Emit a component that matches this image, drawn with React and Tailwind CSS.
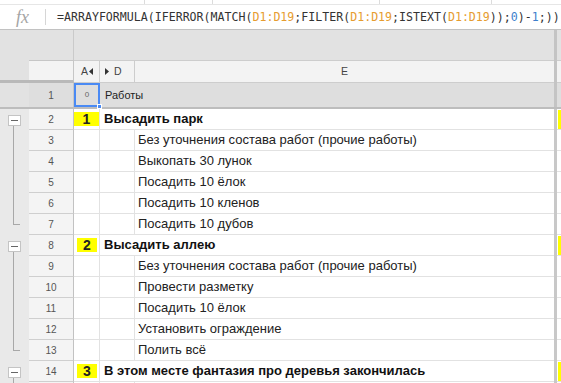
import React from 'react';

const rows = [
  { n: 2, group: '1', text: 'Высадить парк', line: 'group' },
  { n: 3, text: 'Без уточнения состава работ (прочие работы)', line: 'mid' },
  { n: 4, text: 'Выкопать 30 лунок', line: 'mid' },
  { n: 5, text: 'Посадить 10 ёлок', line: 'mid' },
  { n: 6, text: 'Посадить 10 кленов', line: 'mid' },
  { n: 7, text: 'Посадить 10 дубов', line: 'last' },
  { n: 8, group: '2', text: 'Высадить аллею', line: 'group', inset: true },
  { n: 9, text: 'Без уточнения состава работ (прочие работы)', line: 'mid' },
  { n: 10, text: 'Провести разметку', line: 'mid' },
  { n: 11, text: 'Посадить 10 ёлок', line: 'mid' },
  { n: 12, text: 'Установить ограждение', line: 'mid' },
  { n: 13, text: 'Полить всё', line: 'last' },
  { n: 14, group: '3', text: 'В этом месте фантазия про деревья закончилась', line: 'group', inset: true },
];

const R = ({ children }) => <span className="text-[#e69c2f]">{children}</span>;
const B = ({ children }) => <span className="text-[#3d7fcc]">{children}</span>;

const Gutter = ({ line }) => {
  if (line === 'group') {
    return (
      <div className="w-[29px] shrink-0 flex flex-col bg-[#e9e9e9]">
        <div className="mt-[6px] ml-[8px] w-[13px] h-[11px] bg-white border border-[#c4c4c4] flex items-center justify-center">
          <div className="w-[7px] h-px bg-[#666]" />
        </div>
        <div className="flex-1 ml-[13px] border-l border-[#a8a8a8]" />
      </div>
    );
  }
  return (
    <div className="w-[29px] shrink-0 bg-[#e9e9e9]">
      {line === 'mid' ? (
        <div className="h-full ml-[13px] border-l border-[#a8a8a8]" />
      ) : (
        <div className="h-[11px] ml-[13px] w-[7px] border-l border-b border-[#a8a8a8]" />
      )}
    </div>
  );
};

export default function App() {
  return (
    <div className="w-[561px] h-[383px] overflow-hidden bg-white font-['Liberation_Sans',Arial,sans-serif] text-[#222]">
      {/* toolbar bottom strip */}
      <div className="flex h-[5px] border-b border-[#e6e6e6]">
        <div className="w-[145px] border-r border-[#dcdcdc]" />
        <div className="w-[68px] border-r border-[#dcdcdc]" />
        <div className="w-[167px] border-r border-[#dcdcdc]" />
        <div className="w-[112px] border-r border-[#dcdcdc]" />
        <div className="flex-1" />
      </div>

      {/* formula bar */}
      <div className="flex items-center h-[25px] border-b border-[#c2c2c2]">
        <div className="w-[46px] shrink-0 flex items-center h-[16px] border-r border-[#d6d6d6]">
          <span className="ml-[16px] font-['Liberation_Serif',serif] italic text-[18px] leading-none text-[#a5a5a5]">fx</span>
        </div>
        <div className="ml-[11px] pt-px whitespace-nowrap font-['DejaVu_Sans_Mono',monospace] text-[11.6px] text-[#333]">
          =ARRAYFORMULA(IFERROR(MATCH(<R>D1:D19</R>;FILTER(<R>D1:D19</R>;ISTEXT(<R>D1:D19</R>));<B>0</B>)-<B>1</B>;))
        </div>
      </div>

      {/* group area */}
      <div className="flex h-[30px] bg-[#e2e2e2]">
        <div className="w-[74px] shrink-0 border-r border-[#cacaca]" />
        <div className="w-[480px] shrink-0" />
        <div className="w-[3px] shrink-0 bg-[#c4c4c4]" />
        <div className="flex-1" />
      </div>

      {/* column headers */}
      <div className="flex h-[23px] text-[10.5px] text-[#444]">
        <div className="w-[29px] shrink-0 bg-[#e2e2e2] border-b-[3px] border-[#b9b9b9]" />
        <div className="w-[45px] shrink-0 bg-[#f3f3f3] border-r border-t border-[#c6c6c6] border-b-[3px] border-b-[#b9b9b9]" />
        <div className="w-[26px] shrink-0 bg-[#f3f3f3] border-r border-t border-b border-[#cdcdcd] flex items-center justify-end pr-[6px] gap-[1px]">
          <span>A</span>
          <svg width="4" height="7" viewBox="0 0 4 7"><path d="M4 0 L0 3.5 L4 7 Z" fill="#333" /></svg>
        </div>
        <div className="w-[35px] shrink-0 bg-[#f3f3f3] border-r border-t border-b border-[#cdcdcd] flex items-center pl-[5px] gap-[5px]">
          <svg width="4" height="7" viewBox="0 0 4 7"><path d="M0 0 L4 3.5 L0 7 Z" fill="#333" /></svg>
          <span>D</span>
        </div>
        <div className="w-[419px] shrink-0 bg-[#f3f3f3] border-t border-b border-[#cdcdcd] flex items-center justify-center">E</div>
        <div className="w-[3px] shrink-0 bg-[#c4c4c4]" />
        <div className="flex-1 bg-[#f3f3f3] border-t border-b border-[#cdcdcd]" />
      </div>

      {/* row 1 */}
      <div className="flex h-[26px] border-b-2 border-[#bdbdbd] bg-[#dedede] text-[11px]">
        <div className="w-[29px] shrink-0 bg-[#e2e2e2]" />
        <div className="w-[45px] shrink-0 border-r border-[#c6c6c6] flex items-center justify-center text-[10px] text-[#555]">1</div>
        <div className="relative w-[26px] shrink-0 border-2 border-[#4a8af4] flex items-center justify-center text-[8px] text-[#666]">
          0
          <div className="absolute -right-[4px] -bottom-[4px] w-[5px] h-[5px] bg-[#4a8af4] border border-white" />
        </div>
        <div className="flex-1 flex items-center pl-[5px] text-[#222]">Работы</div>
        <div className="w-[3px] shrink-0 bg-[#c4c4c4]" />
        <div className="w-[4px] shrink-0" />
      </div>

      {/* data rows */}
      {rows.map((r) => (
        <div key={r.n} className="flex h-[21px]">
          <Gutter line={r.line} />
          <div className="w-[45px] shrink-0 bg-[#f4f4f4] border-r border-b border-[#cfcfcf] border-r-[#c2c2c2] flex items-center justify-center text-[10px] text-[#555]">
            {r.n}
          </div>
          {r.group ? (
            <>
              <div className="w-[26px] shrink-0 border-r border-b border-[#e2e2e2] flex items-center">
                <div className={`flex items-center justify-center h-[14px] bg-[#ffff00] font-bold text-[14px] ${r.inset ? 'ml-[3px] w-[20px]' : 'w-[25px]'}`}>
                  {r.group}
                </div>
              </div>
              <div className="w-[454px] shrink-0 border-b border-[#e2e2e2] flex items-center pl-[4px] font-bold text-[13px] text-[#111] whitespace-nowrap">
                {r.text}
              </div>
            </>
          ) : (
            <>
              <div className="w-[26px] shrink-0 border-r border-b border-[#e2e2e2]" />
              <div className="w-[35px] shrink-0 border-r border-b border-[#e2e2e2]" />
              <div className="w-[419px] shrink-0 border-b border-[#e2e2e2] flex items-center pl-[3px] text-[13px] text-[#222] whitespace-nowrap">
                {r.text}
              </div>
            </>
          )}
          <div className="w-[3px] shrink-0 bg-[#c8c8c8]" />
          <div className="flex-1 border-b border-[#e2e2e2] flex items-center">
            {r.group && <div className="ml-[1px] w-full h-[19px] bg-[#ffff00]" />}
          </div>
        </div>
      ))}

      <div className="flex h-[4px]">
        <div className="w-[29px] shrink-0 bg-[#e9e9e9]">
          <div className="h-full ml-[13px] border-l border-[#a8a8a8]" />
        </div>
        <div className="w-[45px] shrink-0 bg-[#f4f4f4] border-r border-[#c2c2c2]" />
        <div className="w-[26px] shrink-0 border-r border-[#e2e2e2]" />
        <div className="w-[35px] shrink-0 border-r border-[#e2e2e2]" />
        <div className="w-[419px] shrink-0" />
        <div className="w-[3px] shrink-0 bg-[#c8c8c8]" />
      </div>
    </div>
  );
}
